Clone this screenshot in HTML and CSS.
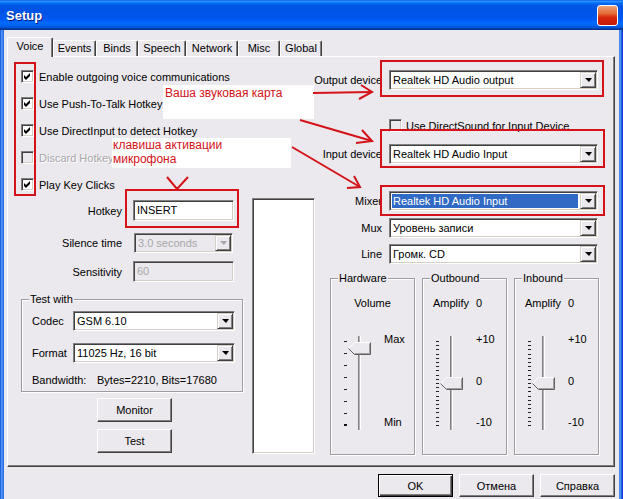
FILE: index.html
```html
<!DOCTYPE html>
<html lang="ru">
<head>
  <meta charset="UTF-8" />
  <title>Setup</title>
  <link rel="stylesheet" href="styles.css">
</head>
<body>
  <div class="window">
    <div class="titlebar">
      <span class="title">Setup</span>
      <span class="close-btn"></span>
    </div>

    <div class="client">
      <div class="tabs">
        <div class="tab active">Voice</div>
        <div class="tab">Events</div>
        <div class="tab">Binds</div>
        <div class="tab">Speech</div>
        <div class="tab">Network</div>
        <div class="tab">Misc</div>
        <div class="tab">Global</div>
      </div>

      <div class="tabpanel">
        <!-- left side: options, hotkey, test -->
        <div class="left-col">
          <div class="checklist">
            <div class="check-row">
              <span class="checkbox"><svg viewBox="0 0 11 11"><path d="M2 4 L4 6 L8 2 L8 5 L4 9 L2 7 Z"/></svg></span>
              Enable outgoing voice communications
            </div>
            <div class="check-row">
              <span class="checkbox"><svg viewBox="0 0 11 11"><path d="M2 4 L4 6 L8 2 L8 5 L4 9 L2 7 Z"/></svg></span>
              Use Push-To-Talk Hotkey
            </div>
            <div class="check-row">
              <span class="checkbox"><svg viewBox="0 0 11 11"><path d="M2 4 L4 6 L8 2 L8 5 L4 9 L2 7 Z"/></svg></span>
              Use DirectInput to detect Hotkey
            </div>
            <div class="check-row disabled">
              <span class="checkbox"></span>
              Discard Hotkey
            </div>
            <div class="check-row">
              <span class="checkbox"><svg viewBox="0 0 11 11"><path d="M2 4 L4 6 L8 2 L8 5 L4 9 L2 7 Z"/></svg></span>
              Play Key Clicks
            </div>
          </div>

          <div class="lower">
            <div class="lower-form">
              <div class="form-row row-hotkey">
                <span class="lbl">Hotkey</span>
                <div class="edit">INSERT</div>
              </div>
              <div class="form-row row-silence">
                <span class="lbl">Silence time</span>
                <div class="combo disabled short">
                  <span class="combo-text">3.0 seconds</span>
                  <span class="combo-btn"></span>
                </div>
              </div>
              <div class="form-row row-sens">
                <span class="lbl">Sensitivity</span>
                <div class="edit disabled">60</div>
              </div>

              <fieldset class="group test-group">
                <legend>Test with</legend>
                <div class="group-row">
                  <span class="glbl">Codec</span>
                  <div class="combo">
                    <span class="combo-text">GSM 6.10</span>
                    <span class="combo-btn"></span>
                  </div>
                </div>
                <div class="group-row row-format">
                  <span class="glbl">Format</span>
                  <div class="combo">
                    <span class="combo-text">11025 Hz, 16 bit</span>
                    <span class="combo-btn"></span>
                  </div>
                </div>
                <div class="bandwidth">
                  <span class="bw-lbl">Bandwidth:</span>
                  <span>Bytes=2210, Bits=17680</span>
                </div>
              </fieldset>

              <div class="btn-stack">
                <button class="btn">Monitor</button>
                <button class="btn">Test</button>
              </div>
            </div>
            <div class="listbox"></div>
          </div>
        </div>

        <!-- right side: devices and levels -->
        <div class="right-col">
          <div class="field-row">
            <span class="lbl">Output device</span>
            <div class="combo wide">
              <span class="combo-text">Realtek HD Audio output</span>
              <span class="combo-btn"></span>
            </div>
          </div>
          <div class="ds-row">
            <span class="checkbox off"></span>
            Use DirectSound for Input Device
          </div>
          <div class="field-row row-input">
            <span class="lbl">Input device</span>
            <div class="combo wide">
              <span class="combo-text">Realtek HD Audio Input</span>
              <span class="combo-btn"></span>
            </div>
          </div>
          <div class="field-row row-mixer">
            <span class="lbl">Mixer</span>
            <div class="combo wide">
              <span class="combo-text selected">Realtek HD Audio Input</span>
              <span class="combo-btn"></span>
            </div>
          </div>
          <div class="field-row row-mux">
            <span class="lbl">Mux</span>
            <div class="combo wide">
              <span class="combo-text">Уровень записи</span>
              <span class="combo-btn"></span>
            </div>
          </div>
          <div class="field-row row-line">
            <span class="lbl">Line</span>
            <div class="combo wide">
              <span class="combo-text">Громк. CD</span>
              <span class="combo-btn"></span>
            </div>
          </div>

          <div class="levels">
            <fieldset class="group vol-group">
              <legend>Hardware</legend>
              <div class="vol-head center">Volume</div>
              <div class="slider">
                <svg viewBox="0 0 46 98" width="46" height="98">
                  <path d="M6 8.5h3M6 20.5h3M6 32.5h3M6 44.5h3M6 56.5h3M6 68.5h3M6 80.5h3" stroke="#222"/>
                  <rect x="6" y="91" width="3" height="2" fill="#111"/>
                  <line x1="20.5" y1="3" x2="20.5" y2="97" stroke="#808080"/>
                  <line x1="21.5" y1="3" x2="21.5" y2="97" stroke="#b4b3b7"/>
                  <line x1="22.5" y1="3" x2="22.5" y2="97" stroke="#fff"/>
                  <g>
                    <polygon points="10.5,15.5 16.5,9.5 32.5,9.5 32.5,21.5 16.5,21.5" fill="#ebe9ed"/>
                    <polyline points="10.5,15.5 16.5,9.5 32.5,9.5" fill="none" stroke="#fff"/>
                    <polyline points="31.5,10.5 31.5,20.5 16.5,20.5" fill="none" stroke="#a0a0a0"/>
                    <polyline points="32.5,9.5 32.5,21.5 16.5,21.5 10.5,15.5" fill="none" stroke="#606060"/>
                  </g>
                </svg>
                <div class="slider-labels">
                  <span>Max</span>
                  <span>Min</span>
                </div>
              </div>
            </fieldset>

            <fieldset class="group vol-group">
              <legend>Outbound</legend>
              <div class="vol-head"><span class="amp">Amplify</span><span>0</span></div>
              <div class="slider">
                <svg viewBox="0 0 46 98" width="46" height="98">
                  <path d="M6 8.5h3M6 12.5h3M6 16.5h3M6 21.5h3M6 25.5h3M6 29.5h3M6 33.5h3M6 37.5h3M6 42.5h3M6 46.5h3M6 50.5h3M6 54.5h3M6 58.5h3M6 63.5h3M6 67.5h3M6 71.5h3M6 75.5h3M6 79.5h3M6 84.5h3M6 88.5h3M6 92.5h3" stroke="#222"/>
                  <line x1="20.5" y1="3" x2="20.5" y2="97" stroke="#808080"/>
                  <line x1="21.5" y1="3" x2="21.5" y2="97" stroke="#b4b3b7"/>
                  <line x1="22.5" y1="3" x2="22.5" y2="97" stroke="#fff"/>
                  <g transform="translate(0,35)">
                    <polygon points="10.5,15.5 16.5,9.5 32.5,9.5 32.5,21.5 16.5,21.5" fill="#ebe9ed"/>
                    <polyline points="10.5,15.5 16.5,9.5 32.5,9.5" fill="none" stroke="#fff"/>
                    <polyline points="31.5,10.5 31.5,20.5 16.5,20.5" fill="none" stroke="#a0a0a0"/>
                    <polyline points="32.5,9.5 32.5,21.5 16.5,21.5 10.5,15.5" fill="none" stroke="#606060"/>
                  </g>
                </svg>
                <div class="slider-labels">
                  <span>+10</span>
                  <span>0</span>
                  <span>-10</span>
                </div>
              </div>
            </fieldset>

            <fieldset class="group vol-group">
              <legend>Inbound</legend>
              <div class="vol-head"><span class="amp">Amplify</span><span>0</span></div>
              <div class="slider">
                <svg viewBox="0 0 46 98" width="46" height="98">
                  <path d="M6 8.5h3M6 12.5h3M6 16.5h3M6 21.5h3M6 25.5h3M6 29.5h3M6 33.5h3M6 37.5h3M6 42.5h3M6 46.5h3M6 50.5h3M6 54.5h3M6 58.5h3M6 63.5h3M6 67.5h3M6 71.5h3M6 75.5h3M6 79.5h3M6 84.5h3M6 88.5h3M6 92.5h3" stroke="#222"/>
                  <line x1="20.5" y1="3" x2="20.5" y2="97" stroke="#808080"/>
                  <line x1="21.5" y1="3" x2="21.5" y2="97" stroke="#b4b3b7"/>
                  <line x1="22.5" y1="3" x2="22.5" y2="97" stroke="#fff"/>
                  <g transform="translate(0,35)">
                    <polygon points="10.5,15.5 16.5,9.5 32.5,9.5 32.5,21.5 16.5,21.5" fill="#ebe9ed"/>
                    <polyline points="10.5,15.5 16.5,9.5 32.5,9.5" fill="none" stroke="#fff"/>
                    <polyline points="31.5,10.5 31.5,20.5 16.5,20.5" fill="none" stroke="#a0a0a0"/>
                    <polyline points="32.5,9.5 32.5,21.5 16.5,21.5 10.5,15.5" fill="none" stroke="#606060"/>
                  </g>
                </svg>
                <div class="slider-labels">
                  <span>+10</span>
                  <span>0</span>
                  <span>-10</span>
                </div>
              </div>
            </fieldset>
          </div>
        </div>
      </div>

      <div class="dialog-buttons">
        <button class="btn default">OK</button>
        <button class="btn">Отмена</button>
        <button class="btn">Справка</button>
      </div>
    </div>

    <!-- red hand-drawn notes on top of the screenshot -->
    <div class="note note-card">Ваша звуковая карта</div>
    <div class="note note-hotkey">клавиша активации<br>микрофона</div>
    <svg class="markup" width="623" height="499" viewBox="0 0 623 499">
      <g fill="none" stroke="#d31219" stroke-width="2">
        <rect x="15" y="63" width="20" height="132"/>
        <rect x="381" y="61" width="222" height="35"/>
        <rect x="381" y="130" width="223" height="37"/>
        <rect x="381" y="186" width="223" height="29"/>
        <rect x="126" y="190" width="112" height="37"/>
        <polyline points="167,177 177,189 188,177"/>
        <line x1="177" y1="187" x2="177" y2="191"/>
        <line x1="313" y1="93" x2="372" y2="92"/>
        <polyline points="361,85 372,92 359,99"/>
        <line x1="300" y1="120" x2="372" y2="141"/>
        <polyline points="362,130 372,141 356,143"/>
        <line x1="292" y1="147" x2="360" y2="187"/>
        <polyline points="354,176 360,187 347,188"/>
      </g>
    </svg>
  </div>
</body>
</html>
```

FILE: styles.css
```css
* {
  box-sizing: border-box;
}

body {
  margin: 0;
  font-family: "Liberation Sans", Arial, sans-serif;
  font-size: 11px;
  color: #000;
}

.window {
  position: relative;
  width: 623px;
  height: 499px;
  overflow: hidden;
  background: linear-gradient(to right, #0b3fcf 0, #3d88f2 1px, #5c9ef6 2px, #2a6fe8 3px, #2a6fe8 619px, #5c9ef6 620px, #3d88f2 621px, #0b3fcf 622px);
}

/* title bar */
.titlebar {
  height: 30px;
  display: flex;
  align-items: center;
  justify-content: space-between;
  padding: 0 5px 0 6px;
  background: linear-gradient(#0058ee 0%, #3593ff 4%, #288eff 6%, #127dff 8%, #036ffc 10%, #0262ee 14%, #0057e5 20%, #0054e3 24%, #0055eb 56%, #005bf5 66%, #026afe 76%, #0062ef 86%, #0052d6 92%, #0040ab 94%, #003092 100%);
}

.title {
  color: #fff;
  font-weight: bold;
  font-size: 13px;
  text-shadow: 1px 1px #0a1883;
}

.close-btn {
  width: 21px;
  height: 21px;
  border: 1px solid #fff;
  border-radius: 3px;
  background: linear-gradient(#eba47a, #e36a36 40%, #d5280c 60%, #c3180a);
}

/* dialog body */
.client {
  margin: 0 4px;
  height: 469px;
  background: #ebe9ed;
  padding: 7px 4px 0 3px;
}

.tabs {
  position: relative;
  z-index: 1;
  display: grid;
  grid-template-columns: 46px 43px 42px 48px 52px 42px 42px;
  align-items: end;
  height: 19px;
}

.tab {
  height: 16px;
  line-height: 15px;
  text-align: center;
  background: #ebe9ed;
  border: 1px solid;
  border-bottom: none;
  border-color: #fff #404040 transparent #fff;
  border-radius: 2px 2px 0 0;
  box-shadow: inset -1px 0 #808080;
}

.tab.active {
  height: 20px;
  line-height: 16px;
  margin-bottom: -1px;
}

.tabpanel {
  height: 411px;
  display: flex;
  align-items: flex-start;
  padding: 6px 0 0 13px;
  border: 1px solid;
  border-color: #fff #404040 #404040 #fff;
  box-shadow: inset -1px -1px #808080;
}

/* shared classic controls */
.edit,
.combo,
.listbox,
.checkbox {
  background: #fff;
  border: 1px solid;
  border-color: #808080 #fff #fff #808080;
  box-shadow: inset 1px 1px #404040, inset -1px -1px #d4d0c8;
}

.checkbox {
  width: 13px;
  height: 13px;
  flex: none;
  padding: 0;
}

.checkbox svg {
  display: block;
  width: 11px;
  height: 11px;
}

.checkbox path {
  fill: #000;
}

.checkbox.off,
.disabled .checkbox {
  background: #ebe9ed;
}

.edit {
  width: 101px;
  height: 21px;
  padding: 0 3px;
  line-height: 19px;
}

.edit.disabled {
  background: #ebe9ed;
  color: #a7a6aa;
}

.combo {
  display: flex;
  height: 20px;
  padding: 1px;
}

.combo.short {
  width: 99px;
  margin-left: 1px;
}

.combo.wide {
  width: 209px;
}

.combo-text {
  flex: 1;
  padding-left: 2px;
  line-height: 16px;
  white-space: nowrap;
  overflow: hidden;
}

.combo-text.selected {
  background: #316ac5;
  color: #fff;
  margin: 1px 2px 1px 1px;
  line-height: 14px;
  padding-left: 1px;
}

.combo.disabled {
  background: #ebe9ed;
  color: #a7a6aa;
}

.combo-btn {
  width: 16px;
  height: 16px;
  flex: none;
  display: flex;
  align-items: center;
  justify-content: center;
  background: #ebe9ed;
  border: 1px solid;
  border-color: #d4d0c8 #404040 #404040 #d4d0c8;
  box-shadow: inset 1px 1px #fff, inset -1px -1px #808080;
}

.combo-btn::after {
  content: "";
  border-left: 4px solid transparent;
  border-right: 3px solid transparent;
  border-top: 4px solid #000;
}

.combo.disabled .combo-btn::after {
  border-top-color: #a7a6aa;
}

.btn {
  width: 75px;
  height: 24px;
  padding: 0;
  font: inherit;
  color: #000;
  background: #ebe9ed;
  border: 1px solid;
  border-color: #fff #404040 #404040 #fff;
  box-shadow: inset -1px -1px #808080;
}

.btn.default {
  border-color: #000;
  box-shadow: inset 1px 1px #fff, inset -1px -1px #404040, inset -2px -2px #808080;
}

.group {
  margin: 0;
  min-width: 0;
  border: 1px solid #9d9ca1;
  box-shadow: inset 1px 1px #fff, 1px 1px #fff;
}

.group legend {
  padding: 0 1px;
  line-height: 13px;
  background: #ebe9ed;
}

/* left column */
.left-col {
  width: 294px;
  flex: none;
}

.check-row {
  display: flex;
  align-items: center;
  gap: 5px;
  height: 27px;
  white-space: nowrap;
}

.check-row.disabled {
  color: #a7a6aa;
  text-shadow: 1px 1px #fff;
}

.lower {
  display: flex;
  gap: 8px;
}

.lower-form {
  width: 223px;
  flex: none;
}

.form-row {
  display: flex;
  align-items: center;
  gap: 11px;
}

.form-row .lbl {
  width: 101px;
  text-align: right;
}

.row-hotkey {
  margin-top: 2px;
}

.row-silence {
  margin-top: 12px;
}

.row-sens {
  margin-top: 8px;
}

.test-group {
  width: 222px;
  margin-top: 11px;
  padding: 5px 7px 4px 10px;
}

.test-group legend {
  margin-left: -3px;
}

.group-row {
  display: flex;
  align-items: center;
}

.glbl {
  width: 41px;
}

.group-row .combo {
  width: 162px;
}

.row-format {
  margin-top: 12px;
}

.bandwidth {
  display: flex;
  margin-top: 11px;
  line-height: 13px;
}

.bw-lbl {
  width: 65px;
}

.btn-stack {
  display: flex;
  flex-direction: column;
  gap: 7px;
  margin-top: 6px;
  padding-left: 76px;
}

.listbox {
  width: 63px;
  height: 256px;
}

/* right column */
.right-col {
  width: 299px;
  flex: none;
  margin: 7px 0 0 -9px;
}

.field-row {
  display: flex;
  align-items: center;
  gap: 7px;
  height: 20px;
}

.field-row .lbl {
  width: 76px;
  text-align: right;
  white-space: nowrap;
}

.ds-row {
  display: flex;
  align-items: center;
  gap: 4px;
  height: 13px;
  margin-top: 29px;
  padding-left: 83px;
}

.row-input {
  margin-top: 12px;
}

.row-mixer {
  margin-top: 27px;
}

.row-mux {
  margin-top: 7px;
}

.row-line {
  margin-top: 6px;
}

.levels {
  display: flex;
  gap: 7px;
  margin-top: 8px;
  padding-left: 24px;
}

.vol-group {
  width: 85px;
  height: 183px;
  padding: 12px 0 0 7px;
}

.vol-head {
  display: flex;
  height: 13px;
  line-height: 13px;
  padding-left: 3px;
}

.vol-head .amp {
  width: 43px;
}

.vol-head.center {
  justify-content: center;
  margin-left: -7px;
  padding-left: 0;
}

.slider {
  display: flex;
  margin-top: 23px;
}

.slider svg {
  display: block;
  flex: none;
}

.slider-labels {
  display: flex;
  flex-direction: column;
  justify-content: space-between;
  height: 96px;
  line-height: 13px;
}

/* bottom buttons */
.dialog-buttons {
  display: flex;
  justify-content: flex-end;
  gap: 6px;
  margin-top: 7px;
}

.dialog-buttons .btn {
  height: 23px;
}

/* red notes drawn over the dialog */
.note {
  position: absolute;
  background: #fff;
  color: #d31219;
  font-size: 12px;
  line-height: 14px;
  white-space: nowrap;
}

.note-card {
  left: 163px;
  top: 85px;
  width: 151px;
  height: 34px;
  padding: 1px 2px;
}

.note-hotkey {
  left: 112px;
  top: 138px;
  width: 179px;
  height: 30px;
  padding: 0 1px;
}

.markup {
  position: absolute;
  left: 0;
  top: 0;
  pointer-events: none;
}
```
